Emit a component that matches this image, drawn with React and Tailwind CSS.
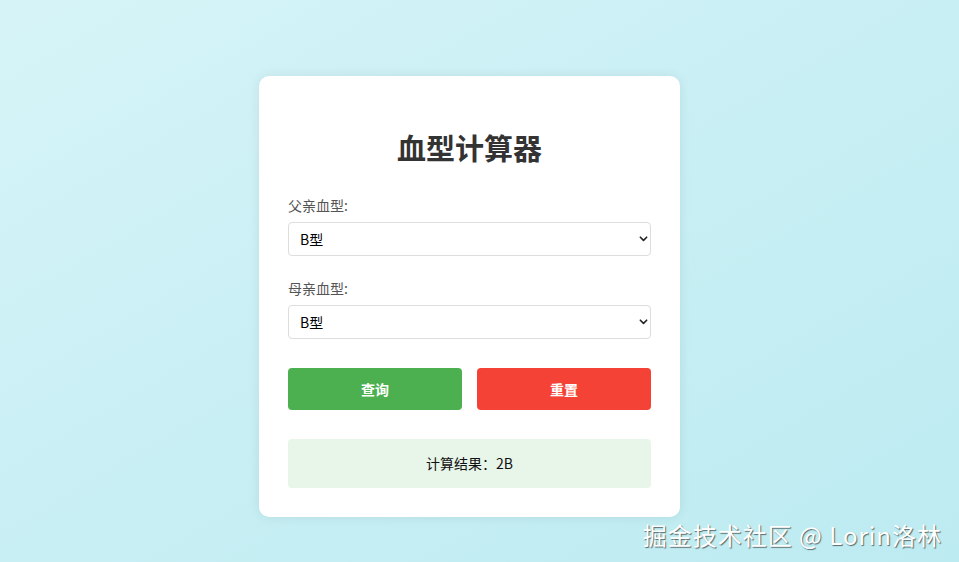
const font = { fontFamily: '"Noto Sans CJK SC", "Noto Sans", sans-serif' }

function BloodSelect({ label, value }) {
  return (
    <div className="flex flex-col">
      <label className="text-[14px] leading-[20px] text-[#555]">{label}</label>
      <div className="relative mt-[7px]">
        <select
          defaultValue={value}
          className="w-full h-[34px] appearance-none rounded-[4px] border border-[#ddd] bg-white pl-[11px] pr-8 text-[14px] text-black outline-none"
        >
          <option value="A">A型</option>
          <option value="B">B型</option>
          <option value="AB">AB型</option>
          <option value="O">O型</option>
        </select>
        {/* chevron */}
        <svg className="pointer-events-none absolute right-[3px] top-[13px] w-[9px] h-[8px]" viewBox="0 0 10 8" fill="none">
          <path d="M1.5 2 L5 5.5 L8.5 2" stroke="#222" strokeWidth="1.8" strokeLinecap="round" strokeLinejoin="round" />
        </svg>
      </div>
    </div>
  )
}

export default function App() {
  return (
    <div
      className="relative w-full h-[562px] overflow-hidden bg-gradient-to-br from-[#d6f4f8] via-[#c8eff4] to-[#bcebf1] flex justify-center pr-[20px]"
      style={font}
    >
      <div className="mt-[76px] w-[421px] h-[441px] self-start rounded-[10px] bg-white px-[29px] pt-[30px] pb-[29px] shadow-[0_0_12px_rgba(0,0,0,0.08)] flex flex-col">
        <h2 className="mt-[24px] mb-[31px] text-center text-[29px] leading-[34px] font-bold text-[#333]">血型计算器</h2>

        <BloodSelect label="父亲血型:" value="B" />
        <div className="mt-[22px]">
          <BloodSelect label="母亲血型:" value="B" />
        </div>

        <div className="mt-[29px] flex gap-[15px]">
          <button className="flex-1 h-[42px] rounded-[4px] bg-[#4caf50] text-white text-[14px] font-bold">查询</button>
          <button className="flex-1 h-[42px] rounded-[4px] bg-[#f44336] text-white text-[14px] font-bold">重置</button>
        </div>

        <div className="mt-[29px] h-[49px] rounded-[4px] bg-[#e8f5e9] flex items-center justify-center text-[14px] text-[#111]">
          计算结果：2B
        </div>
      </div>

      {/* watermark */}
      <div className="absolute right-[17px] bottom-[12px] text-[24px] leading-[30px] text-white [text-shadow:1px_1px_1px_rgba(0,0,0,0.55)] tracking-[1px]">
        掘金技术社区 @ Lorin洛林
      </div>
    </div>
  )
}
